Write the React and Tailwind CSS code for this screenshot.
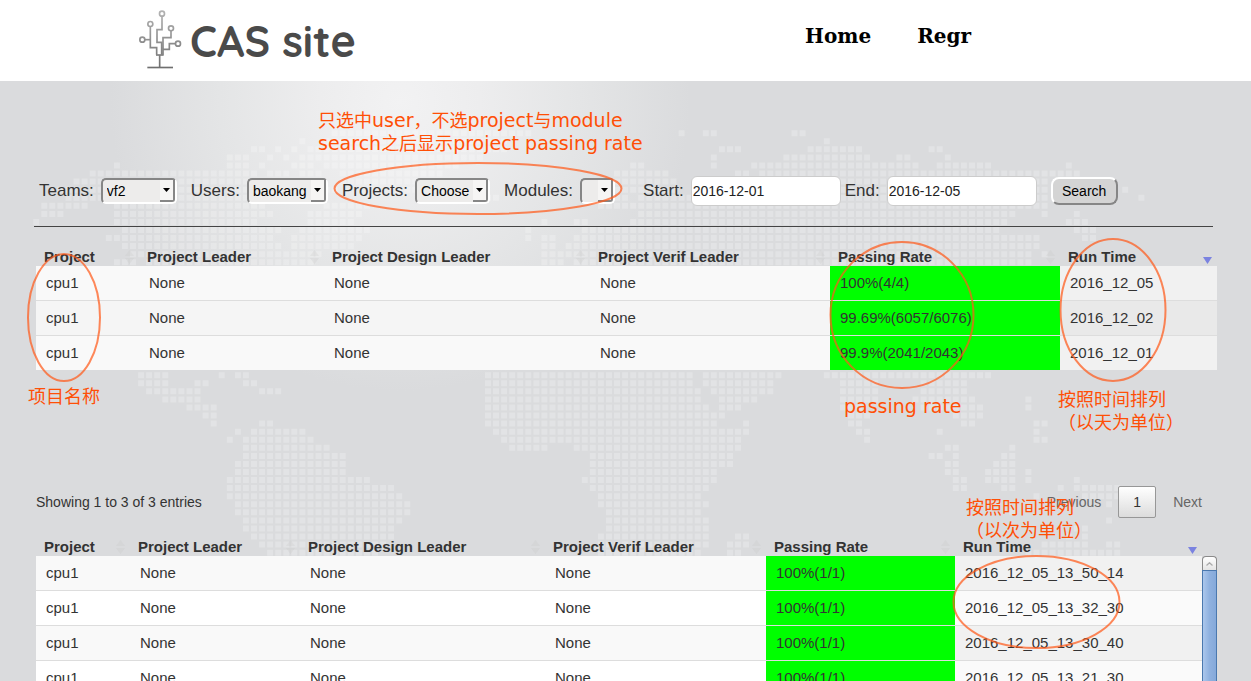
import React from "react";

const SANS = "font-['Liberation_Sans','Noto_Sans_CJK_SC',sans-serif]";

/* Dotted world map: one line per row, each entry is a column or a range of columns. */
const MAP_ROWS = {
  0: "37-61 80 83-84 94-95",
  1: "33 36-58 98",
  2: "27-28 30 32 34-58 85-87 96-102 111-112",
  3: "24-26 29 31 33-55 84 93-103 107-108 113",
  4: "10 24-26 28 32-34 36-52 74-75 84 89-109 112-118 128",
  5: "7-27 29-31 33-35 38-50 72-78 87-88 90-129",
  6: "5-26 30-31 38-48 71-79 83 86-125 128",
  7: "3-26 34-37 45-47 53 70-79 82-125 127 135",
  8: "4-26 56-57 71-73 75-125 137",
  9: "1-6 10-28 36-41 70-125",
  10: "1-3 10-29 34-40 75-121 125 129",
  11: "0 10-27 34-39 63 67-68 74-120 128-130",
  12: "11-30 33-41 61 68-119 129-131",
  13: "9-29 32-40 61 63-64 67-124 130-131",
  14: "11-30 32-39 63-64 66-124",
  15: "12-35 63-123 125",
  16: "10-12 14-34 63-65 67-123",
  30: "13-16 23 25-26 56-81 83-92 98-118",
  31: "13-16 20-21 26-27 56-81 83-91 100-104 110-115",
  32: "14-20 28-30 56-82 84-91 100-104 110-115",
  33: "16-20 56-82 85-89 100-104 109-116 123",
  34: "19-22 56-83 85-87 100-102 110-117 123",
  35: "21-22 56-85 101-103 114-117",
  36: "22 28-29 56-84 88 101-102 115-116 124-125",
  37: "25 27-33 57-88 102-103 112 124",
  38: "24 26-34 58-87 103 124-125",
  39: "26-36 59-63 67-87 113-114 121",
  40: "26-38 69-86 111-112 114 120-121",
  41: "25-38 69-86 113-114 119-121",
  42: "25-38 69-84 113-114 118-121 123",
  43: "24-41 68-84 114-115 118-121 123 129",
  44: "24-44 69-83 114-115 120-121 127 129-134",
  45: "24-45 70-82 124 130-134",
  46: "25-46 70-83 133",
  47: "25-46 71-82 121",
  48: "26-45 71-83 133",
  49: "26-44 71-83 129-130",
  50: "27-44 70-83 87-88 128 130",
  51: "28-43 70-83 86-88 125-130 133-134",
  52: "29-42 70-82 86-87 123-134",
};

const PITCH = 8.067;
const mapPath = Object.entries(MAP_ROWS)
  .flatMap(([row, runs]) =>
    runs.split(" ").flatMap((run) => {
      const [a, b = a] = run.split("-").map(Number);
      return Array.from({ length: b - a + 1 }, (_, i) => {
        const x = (33.2 + PITCH * (a + i)).toFixed(1);
        const y = (49.2 + PITCH * Number(row)).toFixed(1);
        return `M${x} ${y}h6v6h-6z`;
      });
    })
  )
  .join("");

function WorldMap() {
  return (
    <svg className="pointer-events-none absolute left-0 top-0" width="1251" height="600" aria-hidden="true">
      <path d={mapPath} fill="#fff" fillOpacity="0.23" />
    </svg>
  );
}

function Logo() {
  return (
    <a href="#" className="flex items-start gap-1.5 text-[#4a4a4a]">
      <svg width="47" height="62" viewBox="50 24 141 186" fill="none" strokeWidth="5" aria-hidden="true">
        <defs>
          <linearGradient id="stem" gradientUnits="userSpaceOnUse" x1="0" y1="30" x2="0" y2="206">
            <stop offset="0" stopColor="#b4b4b4" />
            <stop offset="1" stopColor="#6e6e6e" />
          </linearGradient>
        </defs>
        <g stroke="url(#stem)">
          <circle cx="125" cy="41" r="7.5" />
          <circle cx="90" cy="72" r="7.5" />
          <circle cx="152" cy="85" r="7.5" />
          <circle cx="66" cy="119" r="7.5" />
          <circle cx="173" cy="131" r="7.5" />
          <path d="M125 49V89H110V127H124V164" />
          <path d="M90 80V143H109V164" />
          <path d="M74 119H90" />
          <path d="M152 93V113H128V164" />
          <path d="M165 131H147V148H128" />
          <path d="M107 165H130" />
          <path d="M118 165V202" />
          <path d="M81 202.500H158" />
        </g>
      </svg>
      <span className="font-['Quicksand','Lato',sans-serif] text-[43px] font-bold leading-[66px]">CAS site</span>
    </a>
  );
}

function Select({ label, id, value, width }) {
  return (
    <div className="flex items-center gap-[7px]">
      <label htmlFor={id}>{label}</label>
      <div className={"relative h-[26px] rounded-[5px] border-2 border-b-white border-l-[#868686] border-r-white border-t-[#868686] bg-[#edeceb] " + width}>
        <select id={id} defaultValue={value} className="block h-full w-full appearance-none bg-transparent pl-1 text-[14px] text-black outline-none">
          <option value={value}>{value}</option>
        </select>
        <span className="pointer-events-none absolute bottom-0 right-0 top-0 flex w-[15px] items-center justify-center rounded-br-[3px] border-b-2 border-r-2 border-[#868686] bg-[#f6f5f4]">
          <svg width="7" height="4" viewBox="0 0 7 4" aria-hidden="true">
            <path d="M0 0H7L3.500 4Z" fill="#000" />
          </svg>
        </span>
      </div>
    </div>
  );
}

function DateField({ label, id, value }) {
  return (
    <div className="flex items-center gap-[7px]">
      <label htmlFor={id}>{label}</label>
      <input id={id} type="text" defaultValue={value} className="h-[30px] w-[150px] rounded-md border border-[#ccc] bg-white px-px text-[14px] text-[#222] outline-none" />
    </div>
  );
}

function SortMark({ sorted }) {
  return sorted ? (
    <svg width="9" height="14" viewBox="0 0 9 14" aria-hidden="true">
      <path d="M0 7H9L4.500 14Z" fill="#7b83e0" />
    </svg>
  ) : (
    <svg width="9" height="14" viewBox="0 0 9 14" aria-hidden="true">
      <path d="M0 6H9L4.500 0ZM0 8H9L4.500 14Z" fill="#c8c8c8" fillOpacity="0.25" />
    </svg>
  );
}

const HEADERS = ["Project", "Project Leader", "Project Design Leader", "Project Verif Leader", "Passing Rate", "Run Time"];

function ResultTable({ cols, rows, evenBg, evenSortBg }) {
  return (
    <table className="w-full table-fixed border-collapse text-left text-[15px] leading-5">
      <colgroup>
        {cols.map((c, i) => (
          <col key={i} className={c} />
        ))}
      </colgroup>
      <thead>
        <tr className="h-[38px]">
          {HEADERS.map((h, i) => (
            <th key={h} className="whitespace-nowrap p-0 pl-2 align-bottom font-bold">
              <div className="flex items-center justify-between pr-[5px] leading-[18px]">
                {h}
                <SortMark sorted={i === 5} />
              </div>
            </th>
          ))}
        </tr>
      </thead>
      <tbody>
        {rows.map(([rate, time], r) => (
          <tr key={time} className={r % 2 ? evenBg : "bg-[#f9f9f9]"}>
            {["cpu1", "None", "None", "None", rate, time].map((v, i) => (
              <td
                key={i}
                className={
                  "whitespace-nowrap py-[7px] pl-2.5 pr-0 " +
                  (r ? "border-t border-[#ddd] " : "") +
                  (i === 4 ? "bg-[#00ff00]" : i === 5 ? (r % 2 ? evenSortBg : "bg-[#f1f1f1]") : "")
                }
              >
                {v}
              </td>
            ))}
          </tr>
        ))}
      </tbody>
    </table>
  );
}

const DAILY = [
  ["100%(4/4)", "2016_12_05"],
  ["99.69%(6057/6076)", "2016_12_02"],
  ["99.9%(2041/2043)", "2016_12_01"],
];

const RUNS = [
  ["100%(1/1)", "2016_12_05_13_50_14"],
  ["100%(1/1)", "2016_12_05_13_32_30"],
  ["100%(1/1)", "2016_12_05_13_30_40"],
  ["100%(1/1)", "2016_12_05_13_21_30"],
];

const DAILY_COLS = ["w-[103px]", "w-[185px]", "w-[266px]", "w-[240px]", "w-[230px]", "w-[157px]"];
const RUN_COLS = ["w-[94px]", "w-[170px]", "w-[245px]", "w-[221px]", "w-[189px]", "w-[247px]"];

function ScrollBar() {
  return (
    <div className="mt-[38px] flex w-[15px] shrink-0 flex-col" aria-hidden="true">
      <div className="flex h-3.5 items-center justify-center rounded-t-[4px] border border-b-0 border-[#8a8a8a] bg-gradient-to-b from-white to-[#e4e4e4]">
        <svg width="7" height="4" viewBox="0 0 7 4" fill="none">
          <path d="M0.500 3.500L3.500 0.700L6.500 3.500" stroke="#aaa" strokeWidth="1.200" />
        </svg>
      </div>
      <div className="flex-1 border-x border-t border-[#4a78ae] bg-gradient-to-r from-[#abc7ec] via-[#8fb1df] to-[#85a9da]" />
    </div>
  );
}

function Latin({ children }) {
  return <span className="text-[19px]">{children}</span>;
}

function Notes() {
  const note = "absolute whitespace-nowrap";
  return (
    <div className="pointer-events-none absolute left-0 top-0 font-['DejaVu_Sans','Noto_Sans_CJK_SC',sans-serif] text-[18px] leading-[23px] text-[#ff4f06]">
      <svg className="absolute left-0 top-0" width="1251" height="681" fill="none" stroke="#ff5a1a" strokeOpacity="0.72" strokeWidth="2" aria-hidden="true">
        <ellipse cx="478" cy="188.500" rx="143.500" ry="25.500" />
        <ellipse cx="64" cy="317.500" rx="36" ry="63.500" />
        <ellipse cx="902" cy="315" rx="71.500" ry="73" />
        <ellipse cx="1113" cy="310" rx="52.500" ry="71" />
        <ellipse cx="1036.500" cy="602" rx="83" ry="46" />
      </svg>
      <p className={note + " left-[318px] top-[109px]"}>
        只选中<Latin>user</Latin>，不选<Latin>project</Latin>与<Latin>module</Latin>
        <br />
        <Latin>search</Latin>之后显示<Latin>project passing rate</Latin>
      </p>
      <p className={note + " left-[28px] top-[385px]"}>项目名称</p>
      <p className={note + " left-[844px] top-[395px]"}>
        <Latin>passing rate</Latin>
      </p>
      <p className={note + " left-[1058px] top-[388px]"}>
        按照时间排列
        <br />
        （以天为单位）
      </p>
      <p className={note + " left-[966px] top-[496px]"}>
        按照时间排列
        <br />
        （以次为单位）
      </p>
    </div>
  );
}

export default function App() {
  return (
    <div className={"relative flex h-screen flex-col overflow-hidden bg-[#dadbdd] text-[#333] " + SANS}>
      <header className="flex h-[81px] shrink-0 items-start justify-between bg-white pl-[137px] pr-[280px] pt-2">
        <Logo />
        <nav className="flex gap-[46px] pt-3 font-['DejaVu_Serif',serif] text-[20px] font-bold leading-8 text-black">
          <a href="#home">Home</a>
          <a href="#regr">Regr</a>
        </nav>
      </header>

      <main className="relative flex min-h-0 flex-1 flex-col bg-[radial-gradient(circle_at_400px_20px,#f2f2f3_0,#ededee_80px,#e4e5e6_180px,#dadbdd_290px)] pl-9 pr-[34px] pt-[95px]">
        <WorldMap />
        <form className="relative flex items-center gap-3.5 whitespace-nowrap pl-[3px] text-[17px]" onSubmit={(e) => e.preventDefault()}>
          <Select label="Teams:" id="team" value="vf2" width="w-[76px]" />
          <Select label="Users:" id="user" value="baokang" width="w-[81px]" />
          <Select label="Projects:" id="project" value="Choose" width="w-[75px]" />
          <Select label="Modules:" id="module" value="" width="w-[35px]" />
          <div className="ml-3.5 flex gap-1">
            <DateField label="Start:" id="start" value="2016-12-01" />
            <DateField label="End:" id="end" value="2016-12-05" />
          </div>
          <button type="submit" className="h-7 w-[67px] rounded-lg border-2 border-b-[#868686] border-l-white border-r-[#868686] border-t-white bg-[#d4d4d4] text-[14px] text-black">
            Search
          </button>
        </form>
        <hr className="relative -ml-0.5 mr-1 mt-5 border-t border-[#444]" />

        <section className="relative pt-px">
          <ResultTable cols={DAILY_COLS} rows={DAILY} evenBg="bg-[#f5f5f5]" evenSortBg="bg-[#e9e9e9]" />
        </section>

        <div className="relative mt-[116px] flex h-8 items-center justify-between text-[14px]">
          <p>Showing 1 to 3 of 3 entries</p>
          <div className="flex items-center gap-0.5 text-[#666]">
            <button type="button" className="h-8 px-[15px]">Previous</button>
            <button type="button" className="h-8 w-[38px] rounded-[2px] border border-[#979797] bg-gradient-to-b from-white to-[#dcdcdc] text-[#333]">1</button>
            <button type="button" className="h-8 px-[15px]">Next</button>
          </div>
        </div>

        <section className="relative flex min-h-0 flex-1 overflow-hidden">
          <div className="min-w-0 flex-1">
            <ResultTable cols={RUN_COLS} rows={RUNS} evenBg="bg-white" evenSortBg="bg-[#fafafa]" />
          </div>
          <ScrollBar />
        </section>
      </main>

      <Notes />
    </div>
  );
}
